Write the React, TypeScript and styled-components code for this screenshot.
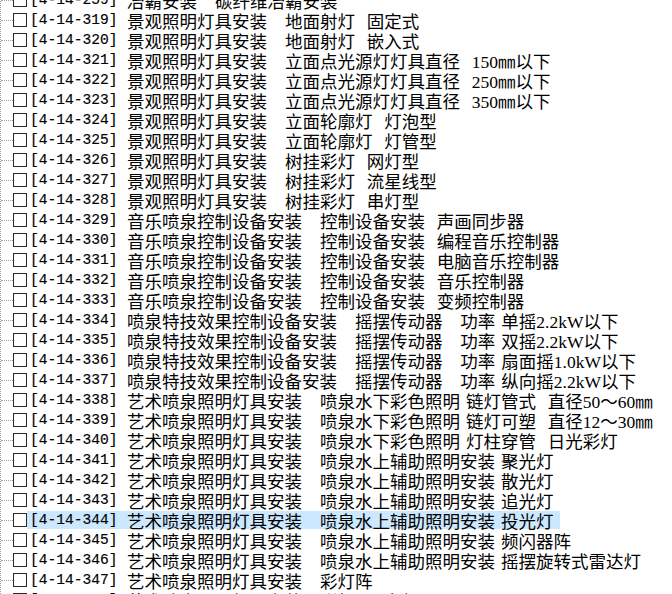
import React from "react";
import styled, { createGlobalStyle } from "styled-components";

const GlobalStyle = createGlobalStyle`
  html, body {
    margin: 0;
    padding: 0;
    background: #fff;
    overflow: hidden;
  }
`;

const Tree = styled.ul`
  list-style: none;
  margin: -10px 0 0 0;
  padding: 0;
  border-left: 1px dotted #a0a0a0;
  color: #000;
`;

const Row = styled.li`
  display: flex;
  align-items: center;
  height: 20px;
`;

const Connector = styled.span`
  width: 12px;
  height: 0;
  border-top: 1px dotted #a0a0a0;
  flex: none;
`;

const CheckBox = styled.span`
  width: 14px;
  height: 14px;
  box-sizing: border-box;
  border: 1px solid #2a2a2a;
  background: #fff;
  flex: none;
`;

const Label = styled.span<{ $selected?: boolean }>`
  display: flex;
  align-items: center;
  height: 18px;
  padding: 0 7px 0 3px;
  white-space: pre;
  background: ${({ $selected }) => ($selected ? "#cce8ff" : "transparent")};
`;

const Code = styled.span`
  font-family: "Liberation Mono", monospace;
  font-size: 14.58px;
  -webkit-text-stroke: 0.15px #000;
`;

const Name = styled.span`
  margin-left: 9.5px;
  font-family: "Liberation Serif", "Noto Sans CJK SC", sans-serif;
  font-size: 17.5px;
  word-spacing: 1.6px;
`;

type Item = { code: string; name: string; selected?: boolean };

const items: Item[] = [
  { code: "4-14-259", name: "冶霸安装   碳纤维冶霸安装" },
  { code: "4-14-319", name: "景观照明灯具安装   地面射灯  固定式" },
  { code: "4-14-320", name: "景观照明灯具安装   地面射灯  嵌入式" },
  { code: "4-14-321", name: "景观照明灯具安装   立面点光源灯灯具直径  150㎜以下" },
  { code: "4-14-322", name: "景观照明灯具安装   立面点光源灯灯具直径  250㎜以下" },
  { code: "4-14-323", name: "景观照明灯具安装   立面点光源灯灯具直径  350㎜以下" },
  { code: "4-14-324", name: "景观照明灯具安装   立面轮廓灯  灯泡型" },
  { code: "4-14-325", name: "景观照明灯具安装   立面轮廓灯  灯管型" },
  { code: "4-14-326", name: "景观照明灯具安装   树挂彩灯  网灯型" },
  { code: "4-14-327", name: "景观照明灯具安装   树挂彩灯  流星线型" },
  { code: "4-14-328", name: "景观照明灯具安装   树挂彩灯  串灯型" },
  { code: "4-14-329", name: "音乐喷泉控制设备安装   控制设备安装  声画同步器" },
  { code: "4-14-330", name: "音乐喷泉控制设备安装   控制设备安装  编程音乐控制器" },
  { code: "4-14-331", name: "音乐喷泉控制设备安装   控制设备安装  电脑音乐控制器" },
  { code: "4-14-332", name: "音乐喷泉控制设备安装   控制设备安装  音乐控制器" },
  { code: "4-14-333", name: "音乐喷泉控制设备安装   控制设备安装  变频控制器" },
  { code: "4-14-334", name: "喷泉特技效果控制设备安装   摇摆传动器   功率 单摇2.2kW以下" },
  { code: "4-14-335", name: "喷泉特技效果控制设备安装   摇摆传动器   功率 双摇2.2kW以下" },
  { code: "4-14-336", name: "喷泉特技效果控制设备安装   摇摆传动器   功率 扇面摇1.0kW以下" },
  { code: "4-14-337", name: "喷泉特技效果控制设备安装   摇摆传动器   功率 纵向摇2.2kW以下" },
  { code: "4-14-338", name: "艺术喷泉照明灯具安装   喷泉水下彩色照明 链灯管式  直径50～60㎜" },
  { code: "4-14-339", name: "艺术喷泉照明灯具安装   喷泉水下彩色照明 链灯可塑  直径12～30㎜" },
  { code: "4-14-340", name: "艺术喷泉照明灯具安装   喷泉水下彩色照明 灯柱穿管  日光彩灯" },
  { code: "4-14-341", name: "艺术喷泉照明灯具安装   喷泉水上辅助照明安装 聚光灯" },
  { code: "4-14-342", name: "艺术喷泉照明灯具安装   喷泉水上辅助照明安装 散光灯" },
  { code: "4-14-343", name: "艺术喷泉照明灯具安装   喷泉水上辅助照明安装 追光灯" },
  { code: "4-14-344", name: "艺术喷泉照明灯具安装   喷泉水上辅助照明安装 投光灯", selected: true },
  { code: "4-14-345", name: "艺术喷泉照明灯具安装   喷泉水上辅助照明安装 频闪器阵" },
  { code: "4-14-346", name: "艺术喷泉照明灯具安装   喷泉水上辅助照明安装 摇摆旋转式雷达灯" },
  { code: "4-14-347", name: "艺术喷泉照明灯具安装   彩灯阵" },
  { code: "4-14-348", name: "艺术喷泉照明灯具安装   彩灯  压力灯" },
];

export default function App() {
  return (
    <>
      <GlobalStyle />
      <Tree>
        {items.map((item) => (
          <Row key={item.code}>
            <Connector />
            <CheckBox />
            <Label $selected={item.selected}>
              <Code>[{item.code}]</Code>
              <Name>{item.name}</Name>
            </Label>
          </Row>
        ))}
      </Tree>
    </>
  );
}
